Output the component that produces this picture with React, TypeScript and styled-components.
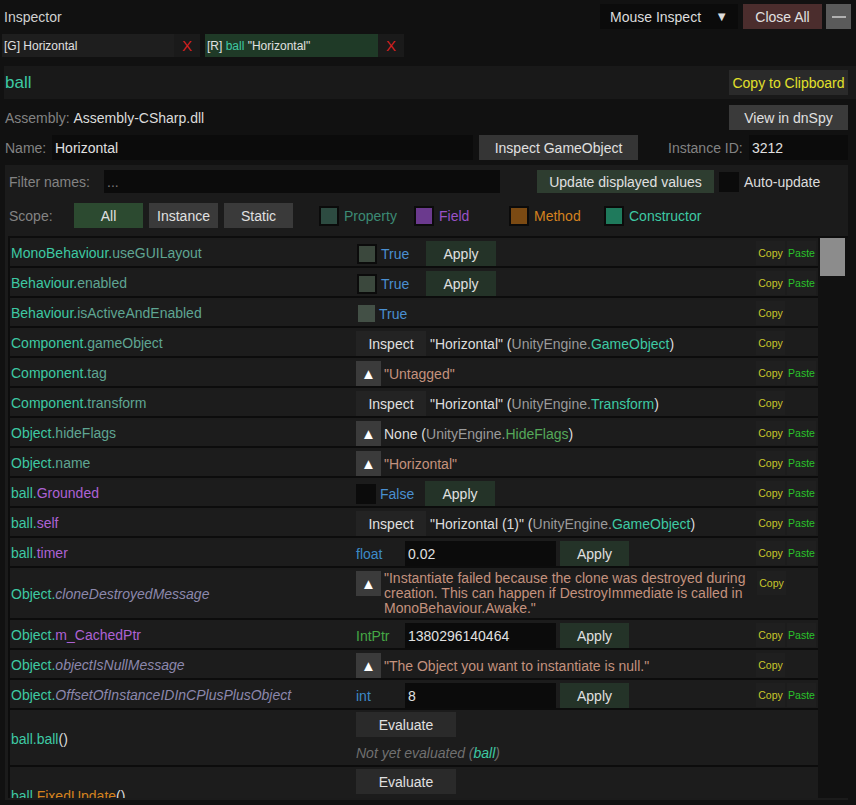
import React from "react";
import styled, { createGlobalStyle } from "styled-components";

type Kind = "prop" | "field" | "static" | "method" | "ctor";

const memberColors: Record<Kind, string> = {
  prop: "#5fa592",
  field: "#ad62d4",
  static: "#8c88ad",
  method: "#d4821f",
  ctor: "#3ec9a3",
};

const GlobalStyle = createGlobalStyle`
  html, body { margin: 0; padding: 0; background: #111; }
  body {
    font-family: "Liberation Sans", Arial, sans-serif;
    font-size: 14px;
    color: #dcdcdc;
  }
  * { box-sizing: border-box; }
`;

const Window = styled.div`
  width: 856px;
  height: 805px;
  overflow: hidden;
  background: #111;
  display: flex;
  flex-direction: column;
`;

const TitleBar = styled.div`
  display: flex;
  align-items: center;
  height: 34px;
  padding: 0 5px 1px 4px;
`;

const Title = styled.div`
  flex: 1;
  color: #d0d0d0;
`;

const Dropdown = styled.div`
  width: 138px;
  height: 25px;
  background: #0b0b0b;
  display: flex;
  align-items: center;
  justify-content: space-between;
  padding: 0 10px 0 10px;
  color: #dcdcdc;
`;

const Btn = styled.div<{ $bg?: string; $w?: number; $color?: string }>`
  height: 25px;
  ${(p) => (p.$w ? `width: ${p.$w}px;` : "")}
  flex-shrink: 0;
  background: ${(p) => p.$bg || "#333"};
  color: ${(p) => p.$color || "#e0e0e0"};
  display: flex;
  align-items: center;
  justify-content: center;
  white-space: nowrap;
`;

const Minimize = styled.div`
  width: 25px;
  height: 25px;
  margin-left: 4px;
  background: #5a5a5a;
  display: flex;
  align-items: center;
  justify-content: center;
  &::after {
    content: "";
    width: 14px;
    height: 2px;
    background: #b0b0b0;
  }
`;

const TabsRow = styled.div`
  display: flex;
  gap: 5px;
  height: 23px;
  padding-left: 2px;
`;

const Tab = styled.div`
  display: flex;
  font-size: 12px;
`;

const TabLabel = styled.div<{ $active?: boolean }>`
  width: ${(p) => (p.$active ? 173 : 172)}px;
  background: ${(p) => (p.$active ? "#1f3a27" : "#1e1e1e")};
  color: #e0e0e0;
  display: flex;
  align-items: center;
  padding-left: 2px;
`;

const TabClose = styled.div`
  width: 26px;
  background: #1a1a1a;
  color: #d42020;
  font-size: 15px;
  display: flex;
  align-items: center;
  justify-content: center;
`;

const Header = styled.div`
  margin: 9px 0 0 4px;
  height: 33px;
  background: #191919;
  display: flex;
  align-items: center;
  justify-content: space-between;
  padding: 0 8px 0 1px;
`;

const HeaderName = styled.div`
  color: #3ec9a3;
  font-size: 17px;
`;

const InfoRow = styled.div`
  display: flex;
  align-items: center;
  height: 25px;
  margin-top: 5px;
  padding: 0 8px 0 5px;
`;

const Label = styled.span<{ $w?: number }>`
  color: #838383;
  flex-shrink: 0;
  ${(p) => (p.$w ? `width: ${p.$w}px;` : "")}
`;

const Strong = styled.span`
  color: #dcdcdc;
`;

const Field = styled.input<{ $w: number; $h?: number }>`
  width: ${(p) => p.$w}px;
  height: ${(p) => p.$h || 25}px;
  flex-shrink: 0;
  background: #0b0b0b;
  border: none;
  outline: none;
  color: #e0e0e0;
  font: inherit;
  padding: 0 3px;
`;

const FilterPanel = styled.div`
  margin: 5px 8px 5px 5px;
  flex: 1;
  min-height: 0;
  background: #1b1b1b;
  display: flex;
  flex-direction: column;
  padding: 5px 0 2px 4px;
`;

const ControlRow = styled.div<{ $mt?: number }>`
  display: flex;
  align-items: center;
  margin-top: ${(p) => p.$mt || 0}px;
`;

const Check = styled.span<{ $fill: string; $border?: boolean }>`
  width: 20px;
  height: 20px;
  flex-shrink: 0;
  background: ${(p) => p.$fill};
  border: ${(p) => (p.$border ? "2px solid #0b0b0b" : "none")};
`;

const Legend = styled.div<{ $color: string }>`
  width: 95px;
  display: flex;
  align-items: center;
  gap: 5px;
  color: ${(p) => p.$color};
`;

const List = styled.div`
  margin: 8px 0 0 -1px;
  flex: 1;
  min-height: 0;
  background: #111;
  border-top: 2px solid #0d0d0d;
  border-left: 2px solid #0d0d0d;
  display: flex;
  overflow: hidden;
  padding-right: 3px;
`;

const Rows = styled.div`
  width: 808px;
  background: #1c1c1c;
  display: flex;
  flex-direction: column;
`;

const Scrollbar = styled.div`
  width: 25px;
  margin-left: 2px;
  &::before {
    content: "";
    display: block;
    height: 38px;
    background: #8c8c8c;
  }
`;

const Row = styled.div`
  display: flex;
  flex-shrink: 0;
  min-height: 30px;
  border-bottom: 2px solid #0c0c0c;
`;

const NameCell = styled.div`
  width: 346px;
  flex-shrink: 0;
  padding: 2px 0 0 1px;
  align-self: center;
  white-space: nowrap;
`;

const Cls = styled.span`
  color: #3ec9a3;
`;

const Member = styled.span<{ $kind: Kind }>`
  color: ${(p) => memberColors[p.$kind]};
  font-style: ${(p) => (p.$kind === "static" ? "italic" : "normal")};
`;

const Plain = styled.span`
  color: #dcdcdc;
`;

const ValueCell = styled.div<{ $top?: boolean; $col?: boolean }>`
  flex: 1;
  display: flex;
  flex-direction: ${(p) => (p.$col ? "column" : "row")};
  align-items: ${(p) => (p.$top || p.$col ? "flex-start" : "center")};
  padding: ${(p) => (p.$col ? "2px 0 4px" : "3px 0 0")};
  white-space: nowrap;
`;

const CopyCell = styled.div`
  width: 62px;
  flex-shrink: 0;
  display: flex;
  gap: 2px;
  padding-top: 3px;
  align-items: flex-start;
`;

const Mini = styled.div<{ $color: string }>`
  width: 29px;
  height: 24px;
  background: #1f1f1f;
  color: ${(p) => p.$color};
  font-size: 10.5px;
  display: flex;
  align-items: center;
  justify-content: center;
`;

const BoolText = styled.span`
  color: #4a8fd0;
  width: 49px;
  padding-left: 4px;
  flex-shrink: 0;
`;

const TypeText = styled.span<{ $color: string }>`
  color: ${(p) => p.$color};
  width: 49px;
  flex-shrink: 0;
`;

const Expand = styled.div`
  width: 25px;
  height: 25px;
  flex-shrink: 0;
  background: #3b3b3b;
  color: #fff;
  font-size: 15px;
  display: flex;
  align-items: center;
  justify-content: center;
  margin-right: 3px;
`;

const Str = styled.span<{ $wrap?: boolean }>`
  color: #c4927e;
  ${(p) =>
    p.$wrap
      ? "white-space: normal; width: 373px; line-height: 15px; padding-bottom: 2px;"
      : ""}
`;

const Ns = styled.span`
  color: #9a9a9a;
`;

const TypeName = styled.span<{ $color?: string }>`
  color: ${(p) => p.$color || "#3ec9a3"};
`;

const Pending = styled.div`
  margin-top: 8px;
  line-height: 16px;
  color: #707070;
  font-style: italic;
`;

const applyBg = "#243328";

const Copy = ({ paste }: { paste?: boolean }) => (
  <CopyCell>
    <Mini $color="#c8c62a">Copy</Mini>
    {paste && <Mini $color="#2ac22a">Paste</Mini>}
  </CopyCell>
);

const Name = ({ cls, member, kind, call }: { cls: string; member: string; kind: Kind; call?: boolean }) => (
  <NameCell>
    <Cls>{cls}.</Cls>
    <Member $kind={kind}>{member}</Member>
    {call && <Plain>()</Plain>}
  </NameCell>
);

const BoolEditor = ({ on, editable }: { on: boolean; editable: boolean }) => (
  <>
    {on ? (
      editable ? (
        <Check $fill="#3b483d" $border style={{ marginLeft: 1 }} />
      ) : (
        <Check $fill="#435046" style={{ marginLeft: 2, width: 17, height: 17 }} />
      )
    ) : (
      <Check $fill="#0b0b0b" />
    )}
    <BoolText>{on ? "True" : "False"}</BoolText>
    {editable && (
      <Btn $bg={applyBg} $w={70}>
        Apply
      </Btn>
    )}
  </>
);

const InspectValue = ({ label, type }: { label: string; type: string }) => (
  <>
    <Btn $bg="#232323" $w={70} style={{ marginRight: 4 }}>
      Inspect
    </Btn>
    <Plain>
      {label} (<Ns>UnityEngine.</Ns>
      <TypeName>{type}</TypeName>)
    </Plain>
  </>
);

const NumberEditor = ({ type, color, value }: { type: string; color: string; value: string }) => (
  <>
    <TypeText $color={color}>{type}</TypeText>
    <Field $w={151} readOnly value={value} />
    <Btn $bg={applyBg} $w={69} style={{ marginLeft: 4 }}>
      Apply
    </Btn>
  </>
);

export default function App() {
  return (
    <Window>
      <GlobalStyle />
      <TitleBar>
        <Title>Inspector</Title>
        <Dropdown>
          <span>Mouse Inspect</span>
          <span style={{ fontSize: 13 }}>▼</span>
        </Dropdown>
        <Btn $bg="#4b2d2d" $w={79} style={{ marginLeft: 5 }}>
          Close All
        </Btn>
        <Minimize />
      </TitleBar>

      <TabsRow>
        <Tab>
          <TabLabel>[G] Horizontal</TabLabel>
          <TabClose>X</TabClose>
        </Tab>
        <Tab>
          <TabLabel $active>
            [R]&nbsp;<Cls>ball</Cls>&nbsp;"Horizontal"
          </TabLabel>
          <TabClose>X</TabClose>
        </Tab>
      </TabsRow>

      <Header>
        <HeaderName>ball</HeaderName>
        <Btn $bg="#2a2a2a" $w={119} $color="#e2e02a">
          Copy to Clipboard
        </Btn>
      </Header>

      <InfoRow style={{ marginTop: 6 }}>
        <Label>Assembly:&nbsp;</Label>
        <Strong style={{ flex: 1 }}>Assembly-CSharp.dll</Strong>
        <Btn $bg="#3a3a3a" $w={119}>
          View in dnSpy
        </Btn>
      </InfoRow>

      <InfoRow>
        <Label $w={47}>Name:</Label>
        <Field $w={421} readOnly value="Horizontal" />
        <Btn $bg="#353535" $w={159} style={{ marginLeft: 6 }}>
          Inspect GameObject
        </Btn>
        <Label $w={81} style={{ marginLeft: 30 }}>
          Instance ID:
        </Label>
        <Field $w={99} readOnly value="3212" />
      </InfoRow>

      <FilterPanel>
        <ControlRow>
          <Label $w={95}>Filter names:</Label>
          <Field $w={396} $h={23} readOnly value="..." style={{ color: "#777" }} />
          <Btn $bg="#2e3d30" $w={177} style={{ marginLeft: 37, height: 23 }}>
            Update displayed values
          </Btn>
          <Check $fill="#0b0b0b" style={{ marginLeft: 5 }} />
          <Plain style={{ marginLeft: 5 }}>Auto-update</Plain>
        </ControlRow>

        <ControlRow $mt={10}>
          <Label $w={65}>Scope:</Label>
          <Btn $bg="#2c4a30" $w={69}>
            All
          </Btn>
          <Btn $bg="#3a3a3a" $w={69} style={{ marginLeft: 6 }}>
            Instance
          </Btn>
          <Btn $bg="#3a3a3a" $w={69} style={{ marginLeft: 6 }}>
            Static
          </Btn>
          <div style={{ width: 26 }} />
          <Legend $color="#3b8a74">
            <Check $fill="#2d4b41" $border />
            Property
          </Legend>
          <Legend $color="#9a52c8">
            <Check $fill="#6b3a8e" $border />
            Field
          </Legend>
          <Legend $color="#d4821f">
            <Check $fill="#7b4a13" $border />
            Method
          </Legend>
          <Legend $color="#3ec9a3">
            <Check $fill="#1f7a5c" $border />
            Constructor
          </Legend>
        </ControlRow>

        <List>
          <Rows>
            <Row>
              <Name cls="MonoBehaviour" member="useGUILayout" kind="prop" />
              <ValueCell>
                <BoolEditor on editable />
              </ValueCell>
              <Copy paste />
            </Row>
            <Row>
              <Name cls="Behaviour" member="enabled" kind="prop" />
              <ValueCell>
                <BoolEditor on editable />
              </ValueCell>
              <Copy paste />
            </Row>
            <Row>
              <Name cls="Behaviour" member="isActiveAndEnabled" kind="prop" />
              <ValueCell>
                <BoolEditor on editable={false} />
              </ValueCell>
              <Copy />
            </Row>
            <Row>
              <Name cls="Component" member="gameObject" kind="prop" />
              <ValueCell>
                <InspectValue label={'"Horizontal"'} type="GameObject" />
              </ValueCell>
              <Copy />
            </Row>
            <Row>
              <Name cls="Component" member="tag" kind="prop" />
              <ValueCell>
                <Expand>▲</Expand>
                <Str>"Untagged"</Str>
              </ValueCell>
              <Copy paste />
            </Row>
            <Row>
              <Name cls="Component" member="transform" kind="prop" />
              <ValueCell>
                <InspectValue label={'"Horizontal"'} type="Transform" />
              </ValueCell>
              <Copy />
            </Row>
            <Row>
              <Name cls="Object" member="hideFlags" kind="prop" />
              <ValueCell>
                <Expand>▲</Expand>
                <Plain>
                  None (<Ns>UnityEngine.</Ns>
                  <TypeName $color="#55a85a">HideFlags</TypeName>)
                </Plain>
              </ValueCell>
              <Copy paste />
            </Row>
            <Row>
              <Name cls="Object" member="name" kind="prop" />
              <ValueCell>
                <Expand>▲</Expand>
                <Str>"Horizontal"</Str>
              </ValueCell>
              <Copy paste />
            </Row>
            <Row>
              <Name cls="ball" member="Grounded" kind="field" />
              <ValueCell>
                <BoolEditor on={false} editable />
              </ValueCell>
              <Copy paste />
            </Row>
            <Row>
              <Name cls="ball" member="self" kind="field" />
              <ValueCell>
                <InspectValue label={'"Horizontal (1)"'} type="GameObject" />
              </ValueCell>
              <Copy paste />
            </Row>
            <Row>
              <Name cls="ball" member="timer" kind="field" />
              <ValueCell>
                <NumberEditor type="float" color="#3c8ac8" value="0.02" />
              </ValueCell>
              <Copy paste />
            </Row>
            <Row>
              <Name cls="Object" member="cloneDestroyedMessage" kind="static" />
              <ValueCell $top>
                <Expand>▲</Expand>
                <Str $wrap>
                  "Instantiate failed because the clone was destroyed during creation. This can
                  happen if DestroyImmediate is called in MonoBehaviour.Awake."
                </Str>
              </ValueCell>
              <Copy />
            </Row>
            <Row>
              <Name cls="Object" member="m_CachedPtr" kind="field" />
              <ValueCell>
                <NumberEditor type="IntPtr" color="#45a845" value="1380296140464" />
              </ValueCell>
              <Copy paste />
            </Row>
            <Row>
              <Name cls="Object" member="objectIsNullMessage" kind="static" />
              <ValueCell>
                <Expand>▲</Expand>
                <Str>"The Object you want to instantiate is null."</Str>
              </ValueCell>
              <Copy />
            </Row>
            <Row>
              <Name cls="Object" member="OffsetOfInstanceIDInCPlusPlusObject" kind="static" />
              <ValueCell>
                <NumberEditor type="int" color="#3c8ac8" value="8" />
              </ValueCell>
              <Copy paste />
            </Row>
            <Row>
              <Name cls="ball" member="ball" kind="ctor" call />
              <ValueCell $col>
                <Btn $bg="#2a2a2a" $w={100}>
                  Evaluate
                </Btn>
                <Pending>
                  Not yet evaluated (<Cls>ball</Cls>)
                </Pending>
              </ValueCell>
              <CopyCell />
            </Row>
            <Row>
              <Name cls="ball" member="FixedUpdate" kind="method" call />
              <ValueCell $col>
                <Btn $bg="#2a2a2a" $w={100}>
                  Evaluate
                </Btn>
                <Pending style={{ visibility: "hidden" }}>Not yet evaluated</Pending>
              </ValueCell>
              <CopyCell />
            </Row>
          </Rows>
          <Scrollbar />
        </List>
      </FilterPanel>
    </Window>
  );
}
